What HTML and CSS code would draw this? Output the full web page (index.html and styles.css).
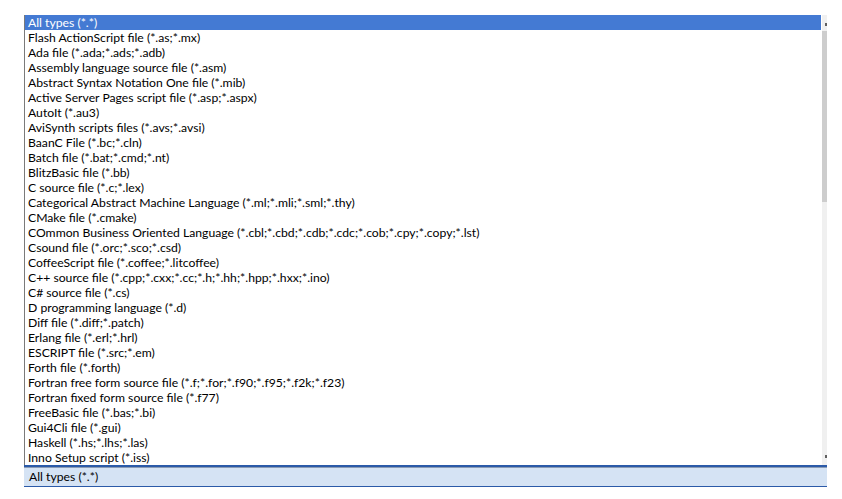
FILE: index.html
```html
<!DOCTYPE html>
<html lang="en">
<head>
<meta charset="utf-8">
<title>File types</title>
<link rel="stylesheet" href="styles.css">
</head>
<body>
<div class="dropdown">
  <div class="list">
    <ul class="items">
      <li class="item selected">All types (*.*)</li>
      <li class="item">Flash ActionScript file (*.as;*.mx)</li>
      <li class="item">Ada file (*.ada;*.ads;*.adb)</li>
      <li class="item">Assembly language source file (*.asm)</li>
      <li class="item">Abstract Syntax Notation One file (*.mib)</li>
      <li class="item">Active Server Pages script file (*.asp;*.aspx)</li>
      <li class="item">AutoIt (*.au3)</li>
      <li class="item">AviSynth scripts files (*.avs;*.avsi)</li>
      <li class="item">BaanC File (*.bc;*.cln)</li>
      <li class="item">Batch file (*.bat;*.cmd;*.nt)</li>
      <li class="item">BlitzBasic file (*.bb)</li>
      <li class="item">C source file (*.c;*.lex)</li>
      <li class="item">Categorical Abstract Machine Language (*.ml;*.mli;*.sml;*.thy)</li>
      <li class="item">CMake file (*.cmake)</li>
      <li class="item">COmmon Business Oriented Language (*.cbl;*.cbd;*.cdb;*.cdc;*.cob;*.cpy;*.copy;*.lst)</li>
      <li class="item">Csound file (*.orc;*.sco;*.csd)</li>
      <li class="item">CoffeeScript file (*.coffee;*.litcoffee)</li>
      <li class="item">C++ source file (*.cpp;*.cxx;*.cc;*.h;*.hh;*.hpp;*.hxx;*.ino)</li>
      <li class="item">C# source file (*.cs)</li>
      <li class="item">D programming language (*.d)</li>
      <li class="item">Diff file (*.diff;*.patch)</li>
      <li class="item">Erlang file (*.erl;*.hrl)</li>
      <li class="item">ESCRIPT file (*.src;*.em)</li>
      <li class="item">Forth file (*.forth)</li>
      <li class="item">Fortran free form source file (*.f;*.for;*.f90;*.f95;*.f2k;*.f23)</li>
      <li class="item">Fortran fixed form source file (*.f77)</li>
      <li class="item">FreeBasic file (*.bas;*.bi)</li>
      <li class="item">Gui4Cli file (*.gui)</li>
      <li class="item">Haskell (*.hs;*.lhs;*.las)</li>
      <li class="item">Inno Setup script (*.iss)</li>
    </ul>
    <div class="scrollbar">
      <div class="arrow arrow-up"></div>
      <div class="thumb"></div>
      <div class="track"></div>
      <div class="arrow arrow-down"></div>
    </div>
  </div>
  <div class="combo">All types (*.*)</div>
</div>
</body>
</html>
```
FILE: styles.css
```css
html, body {
  margin: 0;
  padding: 0;
  background: #ffffff;
}

body {
  font-family: Lato, "Open Sans", sans-serif;
  font-size: 12.2px;
  color: #000000;
}

.dropdown {
  margin: 15px 0 0 24px;
  width: 803px;
}

.list {
  display: flex;
  height: 450px;
}

.items {
  list-style: none;
  margin: 0;
  padding: 0;
  flex: 1;
  border-left: 1px solid #7a7a7a;
}

.item {
  height: 15px;
  line-height: 15px;
  padding-left: 3px;
  white-space: nowrap;
}

.item.selected {
  background: #447ad3;
  color: #ffffff;
}

.scrollbar {
  width: 5px;
  margin-left: 1px;
  background: #f0f0f0;
  display: flex;
  flex-direction: column;
}

.arrow {
  height: 16px;
  position: relative;
}

.arrow-up::after,
.arrow-down::after {
  content: "";
  position: absolute;
  right: 0;
  width: 2px;
  height: 3px;
  background: #606060;
}

.arrow-up::after { top: 8px; }
.arrow-down::after { top: 6px; }

.thumb {
  height: 171px;
  background: #cdcdcd;
}

.track {
  flex: 1;
}

.combo {
  height: 19px;
  line-height: 19px;
  border-top: 2px solid #2b5aa8;
  border-bottom: 1px solid #2b5aa8;
  background: #d5e3f4;
  padding-left: 5px;
  box-shadow: inset 0 1px 0 #8a9bb5;
}
```
